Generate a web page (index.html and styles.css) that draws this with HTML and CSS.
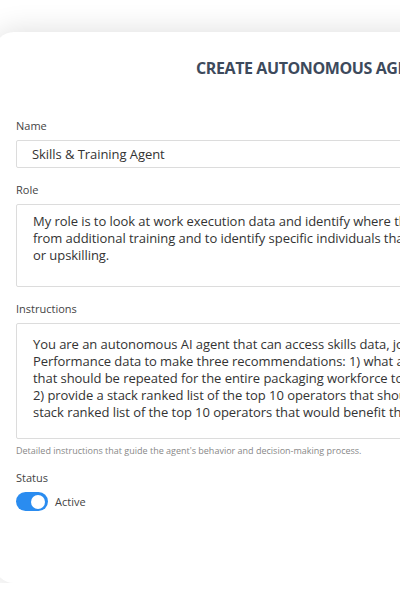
FILE: index.html
```html
<!DOCTYPE html>
<html lang="en">
<head>
    <meta charset="UTF-8">
    <meta name="viewport" content="width=device-width, initial-scale=1.0">
    <title>Create Autonomous Agent</title>
    <link rel="stylesheet" href="styles.css">
</head>
<body>
    <div class="card">
        <!-- Cabeçalho do cartão -->
        <h1 class="card-title">CREATE AUTONOMOUS AGENT</h1>

        <form class="agent-form">
            <div class="field">
                <label for="name">Name</label>
                <div class="box box-input" id="name">Skills &amp; Training Agent</div>
            </div>

            <div class="field">
                <label for="role">Role</label>
                <div class="box box-role" id="role">My role is to look at work execution data and identify where the packaging workforce could benefit<br>from additional training and to identify specific individuals that would benefit from targeted retraining<br>or upskilling.</div>
            </div>

            <div class="field field-hint">
                <label for="instructions">Instructions</label>
                <div class="box box-instructions" id="instructions">You are an autonomous AI agent that can access skills data, job execution data, and Overall Equipment<br>Performance data to make three recommendations: 1) what are the top 3 training courses or certifications<br>that should be repeated for the entire packaging workforce to improve overall packaging performance,<br>2) provide a stack ranked list of the top 10 operators that should be cross-trained, and 3) provide a<br>stack ranked list of the top 10 operators that would benefit the most from retraining.</div>
                <p class="hint">Detailed instructions that guide the agent's behavior and decision-making process.</p>
            </div>

            <div class="field">
                <label>Status</label>
                <div class="status">
                    <span class="toggle"><span class="knob"></span></span>
                    <span class="status-text">Active</span>
                </div>
            </div>
        </form>
    </div>
</body>
</html>
```

FILE: styles.css
```css
/* Corpo da página */
body {
    font-family: "Open Sans", "Liberation Sans", sans-serif;
    background-color: #ffffff;
    margin: 0;
    padding: 0;
    overflow: hidden;
}

/* Cartão principal */
.card {
    background-color: #ffffff;
    width: 800px;
    height: 551px;
    margin: 32px 0 0 -6px;
    border-radius: 20px;
    box-shadow: 0 0 30px rgba(0, 0, 0, 0.14);
    box-sizing: border-box;
    padding: 0 0 0 22px;
}

.card-title {
    margin: 0;
    padding: 24px 0 0 180px;
    font-size: 16px;
    font-weight: 700;
    letter-spacing: -0.4px;
    line-height: 24px;
    color: #3d4a5c;
}

.agent-form {
    margin-top: 38px;
    width: 700px;
}

.field {
    margin-bottom: 14px;
}

.field-hint {
    margin-bottom: 12px;
}

label {
    display: block;
    font-size: 11px;
    line-height: 16px;
    color: #444444;
    margin-bottom: 6px;
}

.box {
    border: 1px solid #dcdcdc;
    border-radius: 2px;
    font-size: 13px;
    letter-spacing: -0.06px;
    color: #333333;
    box-sizing: border-box;
    white-space: nowrap;
}

.box-input {
    height: 28px;
    line-height: 26px;
    padding: 0 15px;
}

.box-role,
.box-instructions {
    line-height: 17px;
    padding: 8px 16px;
}

.box-role {
    height: 83px;
}

.box-instructions {
    height: 116px;
    padding-top: 12px;
}

.hint {
    margin: 5px 0 0;
    font-size: 9px;
    line-height: 14px;
    color: #888888;
}

/* Interruptor de status */
.status {
    display: flex;
    align-items: center;
    gap: 7px;
}

.toggle {
    display: flex;
    align-items: center;
    justify-content: flex-end;
    width: 32px;
    height: 19px;
    padding: 0 3px;
    box-sizing: border-box;
    border-radius: 10px;
    background-color: #2a8cf0;
}

.knob {
    width: 14px;
    height: 14px;
    border-radius: 50%;
    background-color: #ffffff;
}

.status-text {
    font-size: 11px;
    color: #444444;
}
```
